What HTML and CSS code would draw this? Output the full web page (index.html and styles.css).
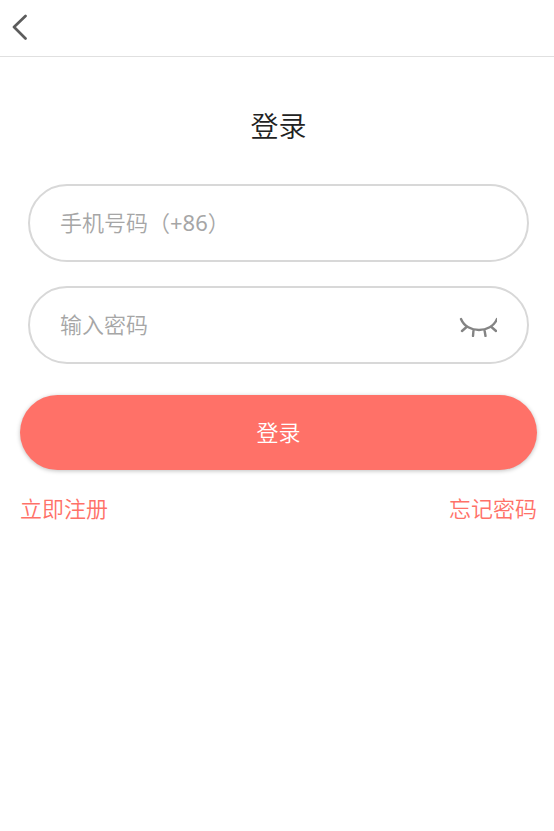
FILE: index.html
```html
<!DOCTYPE html>
<html lang="zh-CN">
<head>
  <meta charset="UTF-8" />
  <title>登录</title>
  <link rel="stylesheet" href="styles.css">
</head>
<body>
  <div class="topbar">
    <svg class="back-icon" width="18" height="26" viewBox="0 0 18 26">
      <path d="M15.5 2 L4 13 L15.5 24.5" fill="none" stroke="#5c5c5c" stroke-width="2.7" stroke-linecap="round" stroke-linejoin="round" />
    </svg>
  </div>

  <div class="container">
    <h1>登录</h1>

    <div class="field">
      <span class="placeholder">手机号码（<span class="code">+86</span>）</span>
    </div>

    <div class="field">
      <span class="placeholder">输入密码</span>
      <svg class="eye-icon" width="38" height="24" viewBox="0 0 38 24">
        <path d="M2 6 C8 20.7 32 20.7 38 6 M7 14.5 L3 18 M33 14.5 L37 18 M14.5 17 L14 23 M25.5 17 L26.5 23" fill="none" stroke="#848484" stroke-width="2.4" stroke-linecap="round" />
      </svg>
    </div>

    <button class="login-button">登录</button>

    <div class="links">
      <a>立即注册</a>
      <a>忘记密码</a>
    </div>
  </div>
</body>
</html>
```

FILE: styles.css
```css
body {
  margin: 0;
  background-color: #fff;
  font-family: "Noto Sans", "Noto Sans CJK SC", sans-serif;
  font-weight: 350;
}
.topbar {
  height: 57px;
  border-bottom: 1px solid #e0e0e0;
  padding: 14px 0 0 10px;
  box-sizing: border-box;
}
.back-icon {
  display: block;
}
.container {
  padding: 0 17px 0 20px;
}
h1 {
  margin: 49px 0 0;
  font-size: 28px;
  line-height: 40px;
  font-weight: 350;
  color: #222;
  text-align: center;
}
.field {
  display: flex;
  align-items: center;
  justify-content: space-between;
  height: 78px;
  margin: 0 8px 24px;
  padding: 0 30px;
  border: 2px solid #d8d8d8;
  border-radius: 39px;
  box-sizing: border-box;
}
h1 + .field {
  margin-top: 38px;
}
.placeholder {
  padding-bottom: 4px;
  font-size: 22px;
  color: #a6a6a6;
}
.code {
  font-weight: 400;
}
.eye-icon {
  display: block;
}
.login-button {
  display: block;
  width: 100%;
  height: 75px;
  margin-top: 31px;
  padding: 0 0 3px;
  border: none;
  border-radius: 38px;
  background-color: #ff7168;
  box-shadow: 0 1px 4px rgba(0, 0, 0, 0.25);
  color: #fff;
  font-family: inherit;
  font-weight: 350;
  font-size: 22px;
}
.links {
  display: flex;
  justify-content: space-between;
  margin-top: 22px;
  font-size: 22px;
  line-height: 32px;
  color: #ff7168;
}
```
